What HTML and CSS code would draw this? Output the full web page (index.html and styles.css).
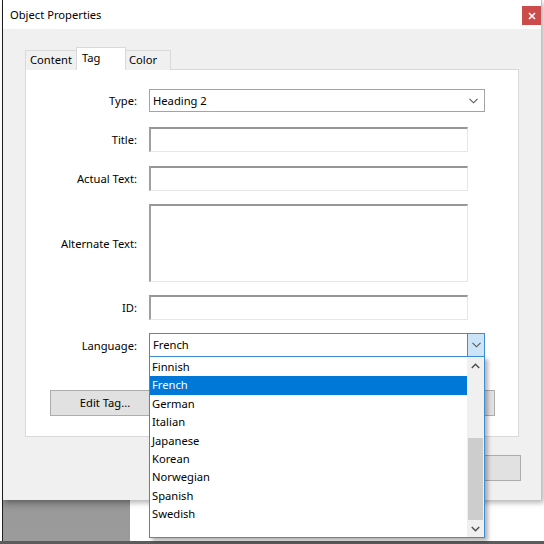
FILE: index.html
```html
<!DOCTYPE html>
<html>
<head>
<meta charset="utf-8">
<link rel="stylesheet" href="styles.css">
</head>
<body>
<div class="screen">
  <div class="frame">
    <div class="window">
      <div class="titlebar">
        <span class="title">Object Properties</span>
        <span class="close"><svg width="8" height="8" viewBox="0 0 8 8"><path d="M1 1L7 7M7 1L1 7" stroke="#fff" stroke-width="1.6"/></svg></span>
      </div>
      <div class="body">
        <div class="tabs">
          <div class="tab t-content">Content</div>
          <div class="tab active t-tag">Tag</div>
          <div class="tab t-color">Color</div>
        </div>
        <div class="panel">
          <div class="row r-type">
            <span class="label">Type:</span>
            <div class="select">
              <span>Heading 2</span>
              <svg class="chev" width="9" height="6" viewBox="0 0 9 6"><path d="M0.5 0.8L4.5 4.8L8.5 0.8" fill="none" stroke="#555" stroke-width="1.1"/></svg>
            </div>
          </div>
          <div class="row r-title">
            <span class="label">Title:</span>
            <div class="input"></div>
          </div>
          <div class="row r-actual">
            <span class="label">Actual Text:</span>
            <div class="input"></div>
          </div>
          <div class="row r-alt">
            <span class="label">Alternate Text:</span>
            <div class="input tall"></div>
          </div>
          <div class="row r-id">
            <span class="label">ID:</span>
            <div class="input"></div>
          </div>
          <div class="row r-lang">
            <span class="label">Language:</span>
            <div class="combo">
              <span class="combo-text">French</span>
              <span class="combo-btn"><svg width="9" height="6" viewBox="0 0 9 6"><path d="M0.5 0.8L4.5 4.8L8.5 0.8" fill="none" stroke="#555" stroke-width="1.1"/></svg></span>
            </div>
          </div>
          <div class="btnrow">
            <div class="btn edit">Edit Tag...</div>
            <div class="btn other"></div>
          </div>
        </div>
        <div class="footer">
          <div class="btn closebtn"></div>
        </div>
      </div>
    </div>
    <div class="below">
      <div class="graybox"></div>
    </div>
  </div>
</div>

<div class="dropdown">
  <div class="items">
    <div class="item">Finnish</div>
    <div class="item sel">French</div>
    <div class="item">German</div>
    <div class="item">Italian</div>
    <div class="item">Japanese</div>
    <div class="item">Korean</div>
    <div class="item">Norwegian</div>
    <div class="item">Spanish</div>
    <div class="item">Swedish</div>
  </div>
  <div class="scrollbar">
    <div class="sb-btn"><svg width="9" height="6" viewBox="0 0 9 6"><path d="M0.8 5L4.5 1.3L8.2 5" fill="none" stroke="#505050" stroke-width="1.5"/></svg></div>
    <div class="sb-track"></div>
    <div class="sb-thumb"></div>
    <div class="sb-btn"><svg width="9" height="6" viewBox="0 0 9 6"><path d="M0.8 1L4.5 4.7L8.2 1" fill="none" stroke="#505050" stroke-width="1.5"/></svg></div>
  </div>
</div>
</body>
</html>
```
FILE: styles.css
```css
* { box-sizing: border-box; }
html, body {
  margin: 0;
  padding: 0;
  width: 544px;
  height: 544px;
  overflow: hidden;
  background: #fff;
  font-family: "Noto Sans", "Open Sans", sans-serif;
  font-size: 11.2px;
  color: #000;
}
.screen {
  position: relative;
  width: 544px;
  height: 544px;
  border-bottom: 3px solid #5c5c5c;
}
.frame {
  margin-left: 2px;
  height: 541px;
  border-left: 1px solid #1f1f1f;
  display: flex;
  flex-direction: column;
}
.window {
  width: 539px;
  height: 500px;
  border-right: 1px solid #c2c2c2;
  display: flex;
  flex-direction: column;
  box-shadow: 2px 3px 5px rgba(0,0,0,0.28);
  position: relative;
  z-index: 1;
}
.titlebar {
  height: 29px;
  background: #fff;
  display: flex;
  align-items: flex-start;
  justify-content: space-between;
  padding-left: 7px;
}
.title {
  line-height: 29px;
}
.close {
  margin-top: 6px;
  width: 19px;
  height: 19px;
  background: #cc4b4b;
  display: flex;
  align-items: center;
  justify-content: center;
}
.body {
  flex: 1;
  background: #f0f0f0;
  padding: 18px 21px 0 22px;
  display: flex;
  flex-direction: column;
}
.tabs {
  height: 23px;
  display: flex;
  align-items: flex-end;
  position: relative;
  z-index: 2;
  margin-bottom: -1px;
}
.tab {
  height: 20px;
  border: 1px solid #d9d9d9;
  border-bottom: none;
  background: #f0f0f0;
  padding-left: 4px;
  line-height: 18px;
}
.t-content { width: 51px; border-right: none; padding-left: 4px; }
.t-tag { width: 50px; }
.t-color { width: 45px; border-left: none; padding-left: 3px; }
.tab.active {
  height: 23px;
  background: #fff;
  line-height: 20px;
  padding-left: 5px;
}
.panel {
  width: 494px;
  height: 368px;
  background: #fff;
  border: 1px solid #d9d9d9;
  padding-top: 19px;
  display: flex;
  flex-direction: column;
}
.row {
  display: flex;
  align-items: center;
}
.label {
  width: 111px;
  text-align: right;
  margin-right: 12px;
}
.r-title { margin-top: 15px; }
.r-actual { margin-top: 14px; }
.r-alt { margin-top: 13px; }
.r-id { margin-top: 13px; }
.r-lang { margin-top: 13px; }
.select {
  width: 336px;
  height: 23px;
  border: 1px solid #a3a3a3;
  display: flex;
  align-items: center;
  justify-content: space-between;
  padding: 0 6px 0 3px;
}
.chev { margin-top: 1px; }
.input {
  width: 319px;
  height: 25px;
  border-top: 2px solid #969696;
  border-left: 2px solid #a0a0a0;
  border-right: 1px solid #e6e6e6;
  border-bottom: 1px solid #e6e6e6;
}
.input.tall { height: 78px; }
.combo {
  width: 336px;
  height: 24px;
  border: 1px solid #3f8bd4;
  display: flex;
  align-items: stretch;
}
.combo-text {
  flex: 1;
  padding-left: 3px;
  line-height: 22px;
}
.combo-btn {
  width: 17px;
  background: #cce4f7;
  border-left: 1px solid #3f8bd4;
  display: flex;
  align-items: center;
  justify-content: center;
}
.btnrow {
  margin-top: 33px;
  display: flex;
  justify-content: space-between;
  padding: 0 23px 0 24px;
}
.btn {
  height: 26px;
  background: #e1e1e1;
  border: 1px solid #adadad;
  text-align: center;
  line-height: 24px;
}
.edit { width: 110px; }
.other { width: 110px; }
.footer {
  margin-top: 18px;
  display: flex;
  justify-content: flex-end;
  margin-right: -1px;
}
.closebtn { width: 90px; }
.below {
  flex: 1;
  display: flex;
}
.graybox {
  width: 127px;
  height: 100%;
  background: linear-gradient(#8c8c8c, #9a9a9a 30%, #9b9b9b);
}
.dropdown {
  position: absolute;
  left: 149px;
  top: 356px;
  width: 336px;
  height: 182px;
  background: #fff;
  border: 1px solid #3f8bd4;
  display: flex;
  box-shadow: 3px 3px 4px rgba(0,0,0,0.3);
  z-index: 5;
}
.items {
  flex: 1;
  padding-top: 1px;
}
.item {
  height: 18.4px;
  line-height: 18.4px;
  padding-left: 2px;
}
.item.sel {
  background: #0078d7;
  color: #fff;
}
.scrollbar {
  width: 17px;
  background: #f0f0f0;
  display: flex;
  flex-direction: column;
}
.sb-btn {
  height: 17px;
  display: flex;
  align-items: center;
  justify-content: center;
}
.sb-track { height: 64px; }
.sb-thumb {
  height: 82px;
  margin: 0 1px;
  background: #cdcdcd;
}
```
